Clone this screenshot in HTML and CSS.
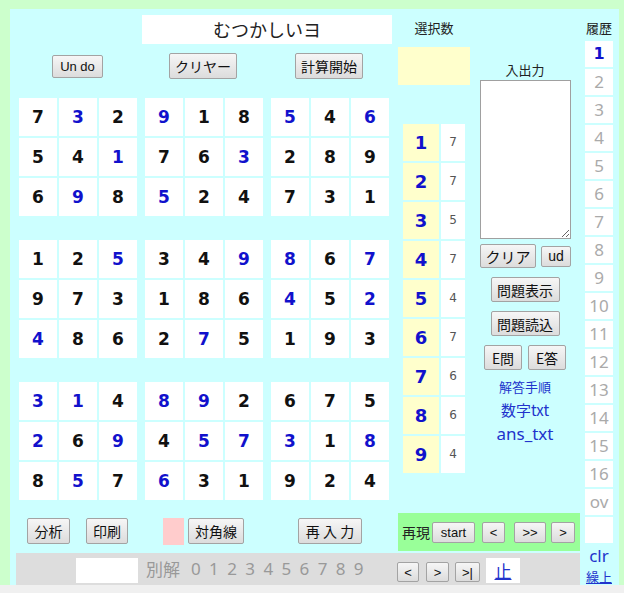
FILE: index.html
```html
<!DOCTYPE html>
<html lang="ja">
<head>
<meta charset="utf-8">
<title>むつかしいヨ</title>
<link rel="stylesheet" href="styles.css">
</head>
<body>
<div class="viewport">
  <div class="page">
    <div class="left">
      <div class="top">
        <div class="board">
          <div class="title">むつかしいヨ</div>
          <div class="btnrow">
            <button class="btn b-undo">Un do</button>
            <button class="btn b-clear">クリヤー</button>
            <button class="btn b-calc">計算開始</button>
          </div>
          <div class="grid">
            <div class="brow">
              <div class="block">
                <div class="cell">7</div><div class="cell b">3</div><div class="cell">2</div>
                <div class="cell">5</div><div class="cell">4</div><div class="cell b">1</div>
                <div class="cell">6</div><div class="cell b">9</div><div class="cell">8</div>
              </div>
              <div class="block">
                <div class="cell b">9</div><div class="cell">1</div><div class="cell">8</div>
                <div class="cell">7</div><div class="cell">6</div><div class="cell b">3</div>
                <div class="cell b">5</div><div class="cell">2</div><div class="cell">4</div>
              </div>
              <div class="block">
                <div class="cell b">5</div><div class="cell">4</div><div class="cell b">6</div>
                <div class="cell">2</div><div class="cell">8</div><div class="cell">9</div>
                <div class="cell">7</div><div class="cell">3</div><div class="cell">1</div>
              </div>
            </div>
            <div class="brow">
              <div class="block">
                <div class="cell">1</div><div class="cell">2</div><div class="cell b">5</div>
                <div class="cell">9</div><div class="cell">7</div><div class="cell">3</div>
                <div class="cell b">4</div><div class="cell">8</div><div class="cell">6</div>
              </div>
              <div class="block">
                <div class="cell">3</div><div class="cell">4</div><div class="cell b">9</div>
                <div class="cell">1</div><div class="cell">8</div><div class="cell">6</div>
                <div class="cell">2</div><div class="cell b">7</div><div class="cell">5</div>
              </div>
              <div class="block">
                <div class="cell b">8</div><div class="cell">6</div><div class="cell b">7</div>
                <div class="cell b">4</div><div class="cell">5</div><div class="cell b">2</div>
                <div class="cell">1</div><div class="cell">9</div><div class="cell">3</div>
              </div>
            </div>
            <div class="brow">
              <div class="block">
                <div class="cell b">3</div><div class="cell b">1</div><div class="cell">4</div>
                <div class="cell b">2</div><div class="cell">6</div><div class="cell b">9</div>
                <div class="cell">8</div><div class="cell b">5</div><div class="cell">7</div>
              </div>
              <div class="block">
                <div class="cell b">8</div><div class="cell b">9</div><div class="cell">2</div>
                <div class="cell">4</div><div class="cell b">5</div><div class="cell b">7</div>
                <div class="cell b">6</div><div class="cell">3</div><div class="cell">1</div>
              </div>
              <div class="block">
                <div class="cell">6</div><div class="cell">7</div><div class="cell">5</div>
                <div class="cell b">3</div><div class="cell">1</div><div class="cell b">8</div>
                <div class="cell">9</div><div class="cell">2</div><div class="cell">4</div>
              </div>
            </div>
          </div>
        </div>

        <div class="sel">
          <div class="label">選択数</div>
          <div class="selbox"></div>
          <div class="nums">
            <div class="nrow"><div class="nbig">1</div><div class="ncount">7</div></div>
            <div class="nrow"><div class="nbig">2</div><div class="ncount">7</div></div>
            <div class="nrow"><div class="nbig">3</div><div class="ncount">5</div></div>
            <div class="nrow"><div class="nbig">4</div><div class="ncount">7</div></div>
            <div class="nrow"><div class="nbig">5</div><div class="ncount">4</div></div>
            <div class="nrow"><div class="nbig">6</div><div class="ncount">7</div></div>
            <div class="nrow"><div class="nbig">7</div><div class="ncount">6</div></div>
            <div class="nrow"><div class="nbig">8</div><div class="ncount">6</div></div>
            <div class="nrow"><div class="nbig">9</div><div class="ncount">4</div></div>
          </div>
        </div>

        <div class="io">
          <div class="iolabel">入出力</div>
          <textarea class="iotext"></textarea>
          <div class="iorow1">
            <button class="btn b-clr">クリア</button>
            <button class="btn b-ud">ud</button>
          </div>
          <button class="btn b-q">問題表示</button>
          <button class="btn b-q">問題読込</button>
          <div class="iorow2">
            <button class="btn b-e">E問</button>
            <button class="btn b-e">E答</button>
          </div>
          <div class="links">
            <a class="lk lk1">解答手順</a>
            <a class="lk lk2">数字txt</a>
            <a class="lk lk3">ans_txt</a>
          </div>
        </div>
      </div>

      <div class="bottomrow">
        <div class="tools">
          <button class="btn b-an">分析</button>
          <button class="btn b-pr">印刷</button>
          <div class="pink"></div>
          <button class="btn b-diag">対角線</button>
          <button class="btn b-re">再 入 力</button>
        </div>
        <div class="replay">
          <span class="rlabel">再現</span>
          <button class="btn r-start">start</button>
          <button class="btn r-prev">&lt;</button>
          <button class="btn r-ff">&gt;&gt;</button>
          <button class="btn r-next">&gt;</button>
        </div>
      </div>

      <div class="graybar">
        <div class="gbox"></div>
        <span class="betsu">別解</span>
        <div class="digits">
          <span>0</span><span>1</span><span>2</span><span>3</span><span>4</span><span>5</span><span>6</span><span>7</span><span>8</span><span>9</span>
        </div>
        <button class="btn g1">&lt;</button>
        <button class="btn g2">&gt;</button>
        <button class="btn g3">&gt;|</button>
        <div class="stop"><a class="stoplink">止</a></div>
      </div>
    </div>

    <div class="hist">
      <div class="hlabel">履歴</div>
      <div class="hcells">
        <div class="hc first">1</div>
        <div class="hc">2</div>
        <div class="hc">3</div>
        <div class="hc">4</div>
        <div class="hc">5</div>
        <div class="hc">6</div>
        <div class="hc">7</div>
        <div class="hc">8</div>
        <div class="hc">9</div>
        <div class="hc">10</div>
        <div class="hc">11</div>
        <div class="hc">12</div>
        <div class="hc">13</div>
        <div class="hc">14</div>
        <div class="hc">15</div>
        <div class="hc">16</div>
        <div class="hc">ov</div>
        <div class="hc"></div>
      </div>
      <a class="hclr">clr</a>
      <a class="hup">繰上</a>
    </div>
  </div>
</div>
<div class="hscroll"></div>
</body>
</html>
```

FILE: styles.css
```css
html, body {
  margin: 0;
  padding: 0;
}
body {
  background: #ccffcc;
  font-family: "Noto Sans CJK JP", "Noto Sans", sans-serif;
  color: #222;
  width: 624px;
  height: 593px;
  overflow: hidden;
}
.viewport {
  height: 585px;
  overflow: hidden;
  padding-top: 9px;
  box-sizing: border-box;
}
.page {
  margin-left: 10px;
  width: 609px;
  height: 576px;
  background: #ccffff;
  display: flex;
  overflow: hidden;
}
.left {
  width: 570px;
  display: flex;
  flex-direction: column;
}
.top {
  height: 495px;
  display: flex;
}

/* buttons */
.btn {
  box-sizing: border-box;
  padding: 0;
  margin: 0;
  border: 1px solid #a3a3a3;
  border-radius: 2px;
  background: linear-gradient(#f6f6f6, #dcdcdc);
  font-family: "Noto Sans CJK JP", "Liberation Sans", sans-serif;
  font-size: 14px;
  line-height: 1;
  color: #111;
  text-align: center;
  white-space: nowrap;
}

/* board */
.board {
  width: 388px;
}
.title {
  margin: 6px 0 0 132px;
  width: 250px;
  height: 29px;
  background: #fff;
  text-align: center;
  font-size: 18px;
  line-height: 29px;
  color: #222;
}
.btnrow {
  margin-top: 9px;
  height: 26px;
  display: flex;
  align-items: center;
  padding-left: 42px;
}
.b-undo {
  width: 51px;
  height: 23px;
  font-family: "Liberation Sans", sans-serif;
  font-size: 13px;
}
.b-clear {
  width: 68px;
  height: 26px;
  margin-left: 66px;
}
.b-calc {
  width: 68px;
  height: 26px;
  margin-left: 58px;
}
.grid {
  margin: 19px 0 0 9px;
  display: flex;
  flex-direction: column;
  gap: 24px;
}
.brow {
  display: flex;
  gap: 8px;
}
.block {
  display: grid;
  grid-template-columns: repeat(3, 38px);
  grid-auto-rows: 38px;
  gap: 2px;
}
.cell {
  background: #fff;
  font-family: "DejaVu Sans", Verdana, sans-serif;
  font-weight: bold;
  font-size: 17px;
  line-height: 38px;
  text-align: center;
  color: #111;
}
.cell.b {
  color: #1111cc;
}

/* select column */
.sel {
  width: 72px;
}
.label {
  margin-top: 9px;
  height: 20px;
  line-height: 20px;
  font-size: 13px;
  text-align: center;
  color: #222;
}
.selbox {
  margin-top: 9px;
  height: 38px;
  background: #ffffcc;
}
.nums {
  margin-top: 39px;
  display: flex;
  flex-direction: column;
  gap: 2px;
  padding-left: 5px;
}
.nrow {
  display: flex;
  gap: 2px;
  height: 37px;
}
.nbig {
  width: 36px;
  background: #ffffcc;
  font-family: "DejaVu Sans", Verdana, sans-serif;
  font-weight: bold;
  font-size: 18px;
  line-height: 37px;
  text-align: center;
  color: #1111cc;
}
.ncount {
  width: 24px;
  background: #fff;
  font-family: "DejaVu Sans", Verdana, sans-serif;
  font-size: 12px;
  line-height: 37px;
  text-align: center;
  color: #555;
}

/* io column */
.io {
  width: 110px;
  display: flex;
  flex-direction: column;
  align-items: center;
}
.iolabel {
  margin-top: 52px;
  height: 18px;
  line-height: 18px;
  font-size: 13px;
  color: #222;
}
.iotext {
  box-sizing: border-box;
  margin: 1px 0 0 1px;
  width: 91px;
  height: 159px;
  border: 1px solid #a0a0a0;
  background: #fff;
  padding: 2px;
  font-size: 13px;
}
.iorow1 {
  margin-top: 5px;
  display: flex;
  align-items: center;
  gap: 5px;
  height: 24px;
  padding-left: 1px;
}
.b-clr {
  width: 56px;
  height: 24px;
  font-size: 15px;
}
.b-ud {
  width: 30px;
  height: 21px;
  font-family: "Liberation Sans", sans-serif;
  font-size: 14px;
}
.b-q {
  margin-top: 9px;
  width: 69px;
  height: 25px;
  font-size: 14px;
}
.iorow2 {
  margin-top: 9px;
  display: flex;
  gap: 6px;
}
.b-e {
  width: 38px;
  height: 25px;
  font-size: 14px;
}
.links {
  margin-top: 6px;
  display: flex;
  flex-direction: column;
  align-items: center;
}
.lk {
  color: #2233cc;
  text-decoration: none;
  cursor: pointer;
}
.lk1 {
  font-size: 13px;
  line-height: 22px;
}
.lk2 {
  font-size: 15px;
  line-height: 24px;
}
.lk3 {
  font-size: 17px;
  line-height: 24px;
  font-family: "Noto Sans", sans-serif;
}

/* bottom row */
.bottomrow {
  height: 49px;
  display: flex;
}
.tools {
  width: 388px;
  display: flex;
  align-items: flex-start;
  padding: 14px 0 0 17px;
  box-sizing: border-box;
}
.b-an {
  width: 43px;
  height: 26px;
}
.b-pr {
  width: 42px;
  height: 26px;
  margin-left: 16px;
}
.pink {
  width: 21px;
  height: 27px;
  margin-left: 35px;
  background: #ffcccc;
}
.b-diag {
  width: 56px;
  height: 26px;
  margin-left: 4px;
}
.b-re {
  width: 64px;
  height: 26px;
  margin-left: 54px;
}
.replay {
  margin-top: 9px;
  width: 182px;
  height: 38px;
  background: #99ff99;
  display: flex;
  align-items: center;
  padding-left: 4px;
  box-sizing: border-box;
}
.rlabel {
  font-size: 14px;
  color: #222;
  width: 28px;
}
.replay .btn {
  height: 21px;
  font-family: "Liberation Sans", sans-serif;
  font-size: 13px;
}
.r-start {
  width: 43px;
  margin-left: 2px;
}
.r-prev {
  width: 23px;
  margin-left: 7px;
}
.r-ff {
  width: 32px;
  margin-left: 9px;
}
.r-next {
  width: 24px;
  margin-left: 5px;
}

/* gray bar */
.graybar {
  margin-left: 6px;
  width: 564px;
  height: 32px;
  background: #dddddd;
  display: flex;
  align-items: flex-start;
  padding-left: 60px;
  box-sizing: border-box;
}
.gbox {
  margin-top: 5px;
  width: 62px;
  height: 25px;
  background: #fff;
}
.betsu {
  margin-left: 8px;
  font-size: 17px;
  line-height: 32px;
  color: #999;
  width: 45px;
}
.digits {
  display: flex;
  width: 206px;
}
.digits span {
  width: 18.1px;
  font-family: "Noto Sans", sans-serif;
  font-size: 17px;
  line-height: 32px;
  color: #999;
}
.graybar .btn {
  margin-top: 9px;
  height: 20px;
  font-family: "Liberation Sans", sans-serif;
  font-size: 13px;
}
.g1 {
  width: 22px;
}
.g2 {
  width: 23px;
  margin-left: 7px;
}
.g3 {
  width: 25px;
  margin-left: 6px;
}
.stop {
  margin: 5px 0 0 6px;
  width: 34px;
  height: 25px;
  background: #fff;
  text-align: center;
  line-height: 25px;
}
.stoplink {
  color: #2233cc;
  font-size: 17px;
  text-decoration: underline;
}

/* history */
.hist {
  margin-left: 5px;
  width: 28px;
  display: flex;
  flex-direction: column;
  align-items: center;
}
.hlabel {
  margin-top: 9px;
  height: 20px;
  line-height: 20px;
  font-size: 13px;
  color: #222;
  white-space: nowrap;
}
.hcells {
  margin-top: 3px;
  display: flex;
  flex-direction: column;
  gap: 2px;
}
.hc {
  width: 28px;
  height: 26px;
  background: #fff;
  text-align: center;
  font-family: "Noto Sans", sans-serif;
  font-size: 17px;
  line-height: 26px;
  color: #aaaaaa;
}
.hc.first {
  font-family: "DejaVu Sans", Verdana, sans-serif;
  font-weight: bold;
  font-size: 16px;
  color: #1111cc;
}
.hclr {
  margin-top: 3px;
  font-family: "Noto Sans", sans-serif;
  font-size: 17px;
  line-height: 20px;
  color: #2233cc;
}
.hup {
  margin-top: 2px;
  font-size: 13px;
  line-height: 18px;
  color: #2233cc;
  text-decoration: underline;
  white-space: nowrap;
}
.hscroll {
  height: 8px;
  background: #f0f0f0;
}
```
